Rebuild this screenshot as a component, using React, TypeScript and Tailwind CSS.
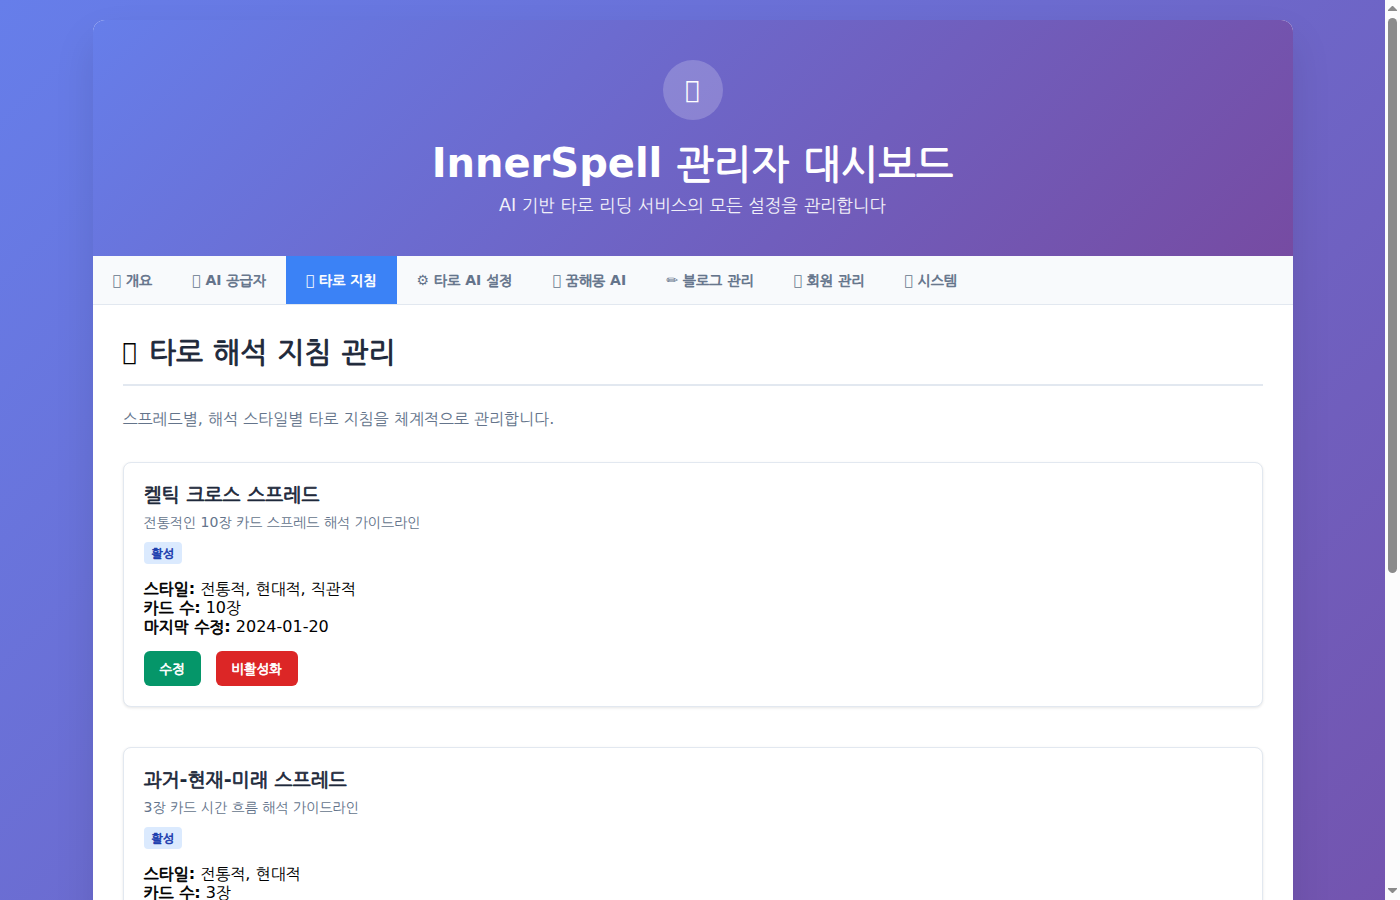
const GLYPH = '\u{10FFFD}';

const tabs = [
  { icon: GLYPH, label: '개요' },
  { icon: GLYPH, label: 'AI 공급자' },
  { icon: GLYPH, label: '타로 지침', active: true },
  { icon: '⚙', label: '타로 AI 설정' },
  { icon: GLYPH, label: '꿈해몽 AI' },
  { icon: '✏', label: '블로그 관리' },
  { icon: GLYPH, label: '회원 관리' },
  { icon: GLYPH, label: '시스템' },
];

const spreads = [
  { title: '켈틱 크로스 스프레드', desc: '전통적인 10장 카드 스프레드 해석 가이드라인', styles: '전통적, 현대적, 직관적', count: '10장', date: '2024-01-20' },
  { title: '과거-현재-미래 스프레드', desc: '3장 카드 시간 흐름 해석 가이드라인', styles: '전통적, 현대적', count: '3장', date: '2024-01-18' },
];

// Hangul runs sit one pixel lower than Latin; bold ones are the regular face with a thickened outline.
function Ko({ text, bold = false }: { text: string; bold?: boolean }) {
  const runs = text.split(/([가-힣]+(?: [가-힣]+)*)/);
  return (
    <>
      {runs.map((run, i) =>
        i % 2 === 0 ? run : (
          <span
            key={i}
            className={bold ? 'align-[-1px] leading-[0] font-normal [-webkit-text-stroke:calc(0.02em+0.4px)_currentColor] [word-spacing:0.03em]' : 'align-[-1px] leading-[0]'}
          >
            {run}
          </span>
        ),
      )}
    </>
  );
}

function SpreadCard({ spread }: { spread: (typeof spreads)[number] }) {
  return (
    <section className="mb-10 h-[245px] rounded-lg border border-[#e2e8f0] bg-white p-5 shadow-[0_1px_3px_rgba(0,0,0,0.1)]">
      <h3 className="mb-[8px] h-[23px] text-[19.2px] leading-[23px] font-semibold text-[#1e293b]"><Ko text={spread.title} bold /></h3>
      <p className="h-[17px] text-[14px] leading-[17px] text-[#64748b]"><Ko text={spread.desc} /></p>
      <span className="mt-[11px] block h-[22px] w-fit rounded bg-[#dbeafe] px-2 py-1 text-[12px] leading-[14px] font-semibold text-[#1e40af]"><Ko text="활성" bold /></span>
      <div className="mt-[15px] leading-[19px]">
        <div className="h-[19px]"><strong><Ko text="스타일:" bold /></strong> <Ko text={spread.styles} /></div>
        <div className="h-[19px]"><strong><Ko text="카드 수:" bold /></strong> <Ko text={spread.count} /></div>
        <div className="h-[19px]"><strong><Ko text="마지막 수정:" bold /></strong> {spread.date}</div>
      </div>
      <div className="mt-[15px] flex gap-[15px]">
        <button className="h-[35px] rounded-md bg-[#059669] px-4 text-[13.333px] font-semibold text-white"><Ko text="수정" bold /></button>
        <button className="h-[35px] rounded-md bg-[#dc2626] px-4 text-[13.333px] font-semibold text-white"><Ko text="비활성화" bold /></button>
      </div>
    </section>
  );
}

function Scrollbar() {
  return (
    <div className="flex h-[900px] w-[15px] shrink-0 flex-col items-center bg-[#fcfcfc]">
      <svg className="mt-[6px] h-[5px] w-[9px]" viewBox="0 0 9 5" fill="#8b8b8b"><path d="M4 0H5L9 4V5H0V4Z" /></svg>
      <div className="mt-[7px] h-[555px] w-[9px] rounded-full bg-[#8b8b8b]" />
      <svg className="mt-auto mb-[7px] h-[5px] w-[9px]" viewBox="0 0 9 5" fill="#8b8b8b"><path d="M0 0H9V1L5 5H4L0 1Z" /></svg>
    </div>
  );
}

export default function App() {
  return (
    <div className="flex h-[900px] w-[1400px] overflow-hidden font-['DejaVu_Sans','NanumGothic','Noto_Sans_CJK_KR',sans-serif] text-[16px] text-black" lang="ko">
      <div className="h-[1407px] w-[1385px] shrink-0 bg-[linear-gradient(135deg,#667eea_0%,#764ba2_100%)] pt-5">
        <main className="mx-auto h-[1367px] w-[1200px] overflow-hidden rounded-[12px] bg-white shadow-[0_20px_40px_rgba(0,0,0,0.1)]">
          <header className="flex h-[236px] flex-col items-center bg-[linear-gradient(135deg,#667eea_0%,#764ba2_100%)] pt-10 text-white">
            <div className="flex h-[60px] w-[60px] items-center justify-center rounded-full bg-white/20 text-[24px]">{GLYPH}</div>
            <h1 className="mt-5 h-[47px] text-[40px] leading-[47px] font-bold [&>span]:align-[-2px]"><Ko text="InnerSpell 관리자 대시보드" bold /></h1>
            <p className="mt-2 h-[21px] text-[17.6px] leading-[21px] opacity-90"><Ko text="AI 기반 타로 리딩 서비스의 모든 설정을 관리합니다" /></p>
          </header>
          <nav className="flex h-[49px] border-b border-[#e2e8f0] bg-[#f8fafc]">
            {tabs.map((t) => (
              <button key={t.label} className={t.active ? 'bg-[#3b82f6] px-5 text-[14px] font-semibold text-white' : 'px-5 text-[14px] font-semibold text-[#64748b]'}>
                {t.icon} <Ko text={t.label} bold />
              </button>
            ))}
          </nav>
          <div className="p-[30px]">
            <h2 className="mb-5 flex h-[51px] gap-3 border-b-2 border-[#e2e8f0] text-[28.8px] leading-[34px] font-semibold text-[#1e293b]">
              <span className="text-[24px] font-normal text-black">{GLYPH}</span>
              <span><Ko text="타로 해석 지침 관리" bold /></span>
            </h2>
            <p className="mb-[30px] h-[26px] leading-[26px] text-[#64748b]"><Ko text="스프레드별, 해석 스타일별 타로 지침을 체계적으로 관리합니다." /></p>
            {spreads.map((s) => <SpreadCard key={s.title} spread={s} />)}
          </div>
        </main>
      </div>
      <Scrollbar />
    </div>
  );
}
